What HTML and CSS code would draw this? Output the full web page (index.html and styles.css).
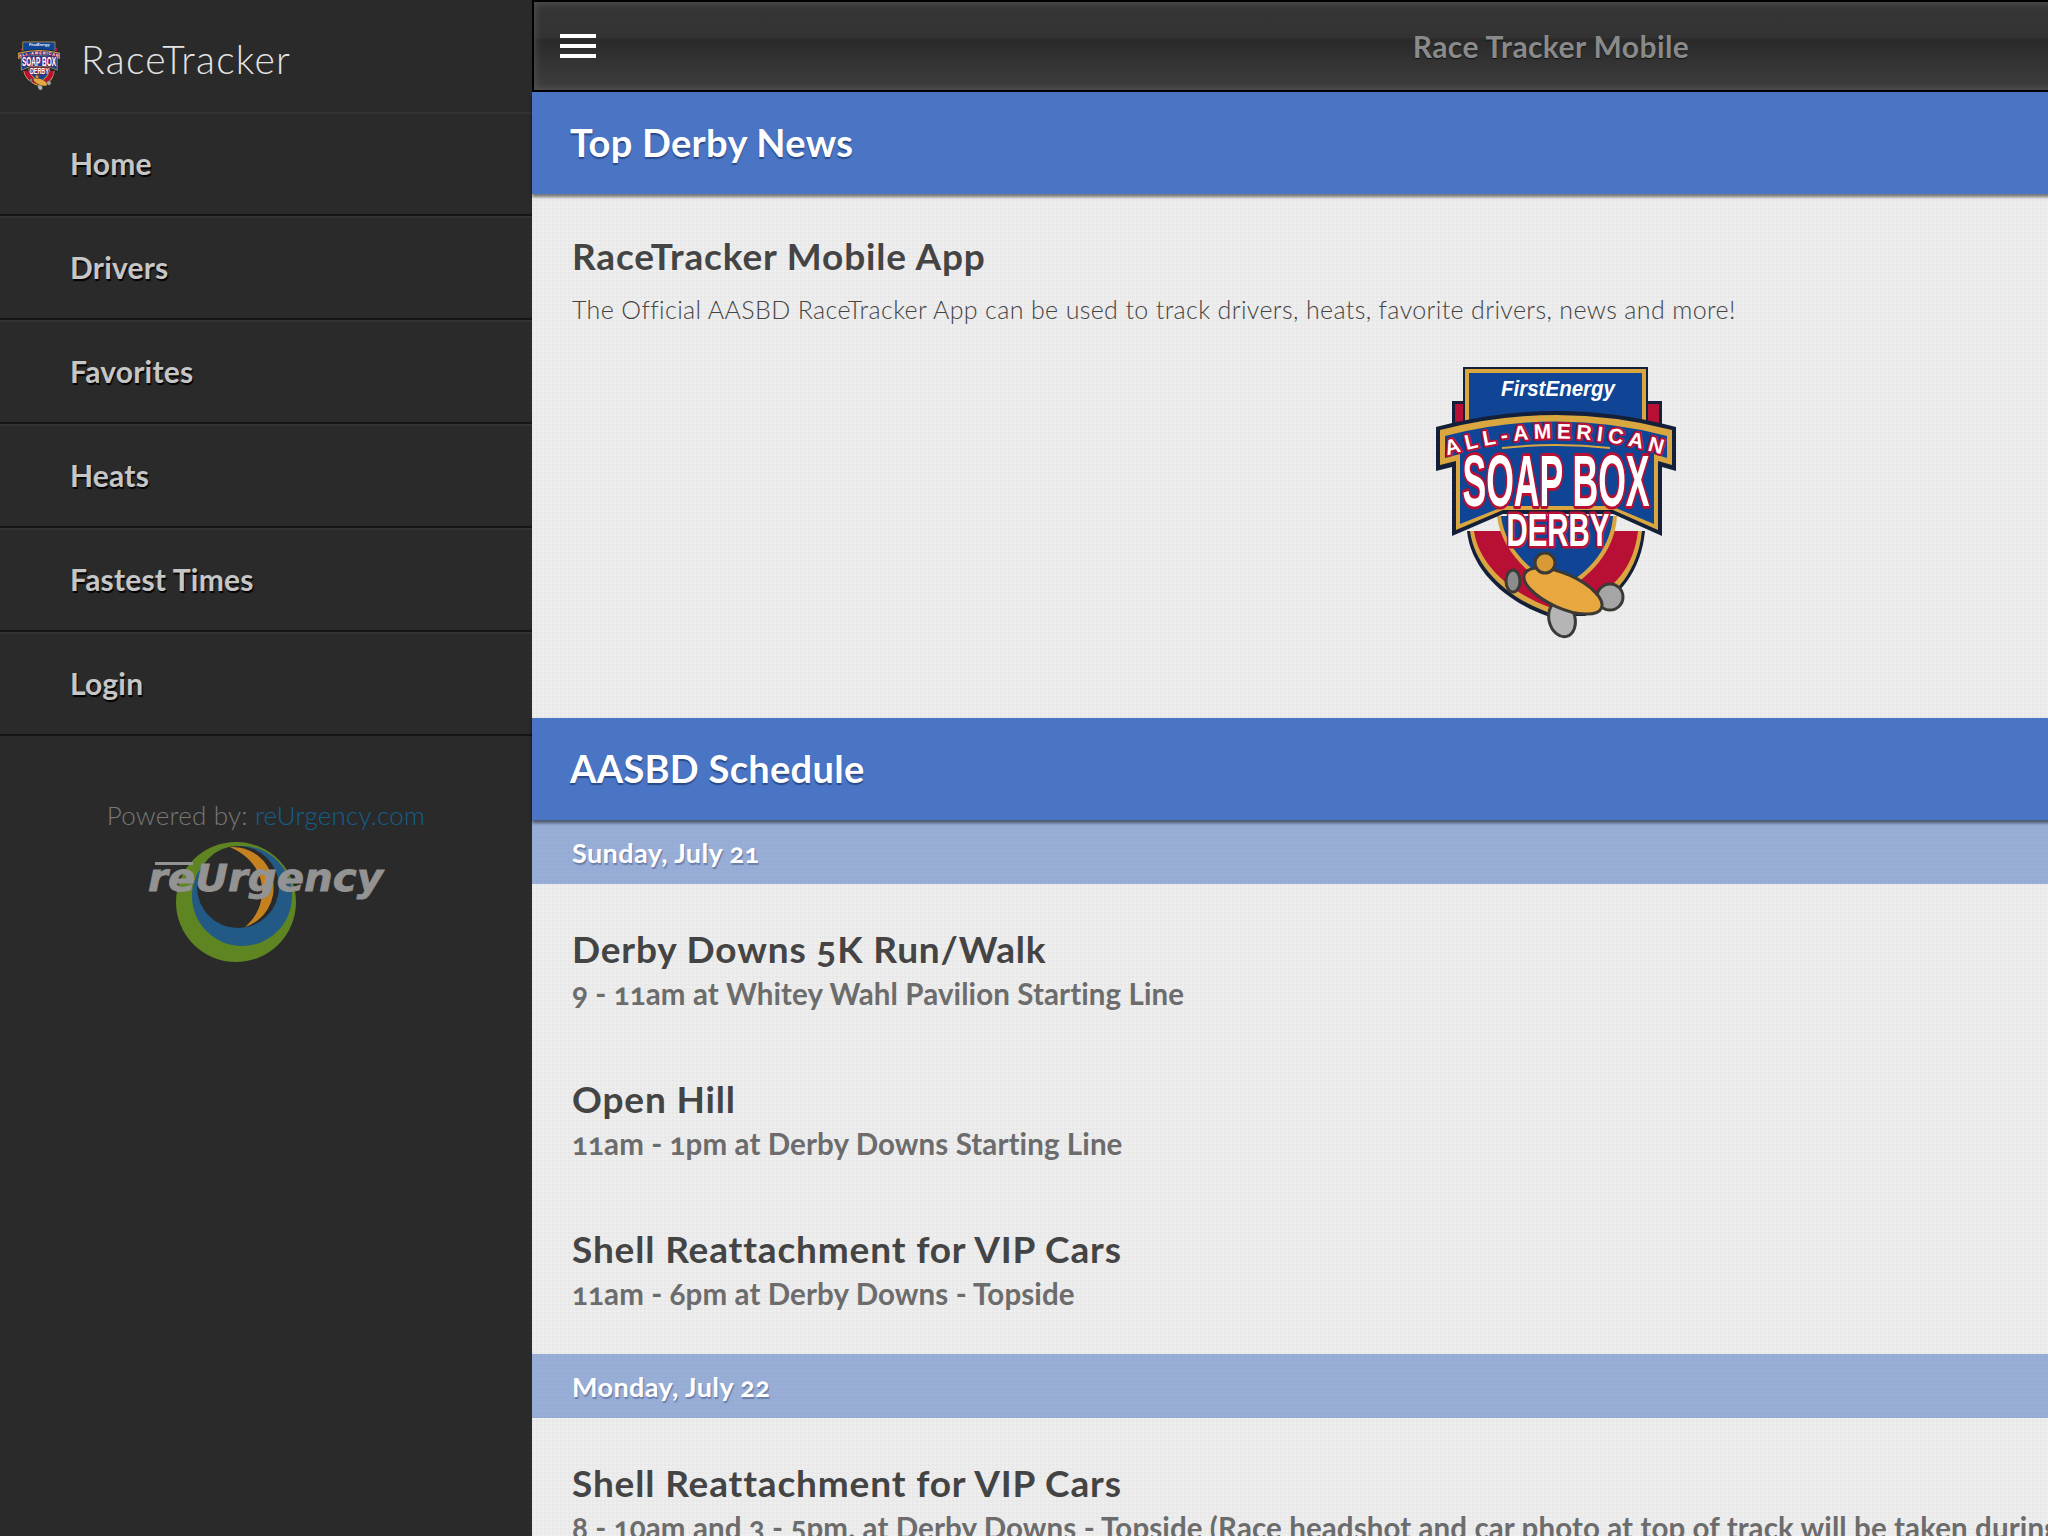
FILE: index.html
```html
<!DOCTYPE html>
<html lang="en">
<head>
    <meta charset="UTF-8">
    <meta name="viewport" content="width=device-width, initial-scale=1.0">
    <title>Race Tracker Mobile</title>
    <link rel="stylesheet" href="styles.css">
</head>
<body>
    <svg class="defs" width="0" height="0">
        <defs>
            <!-- shield logo, drawn on a 242x275 box -->
            <symbol id="derby-logo" viewBox="0 0 242 275" preserveAspectRatio="none">
                <!-- side tabs and top panel -->
                <rect x="17" y="35" width="210" height="40" fill="#14203a"/>
                <rect x="20" y="38" width="204" height="36" fill="#b80f34"/>
                <rect x="28" y="1" width="185" height="65" fill="#14203a"/>
                <rect x="30" y="3" width="181" height="63" fill="#d9a63f"/>
                <rect x="34" y="7" width="173" height="60" fill="#0f4594"/>
                <!-- lower shield -->
                <path d="M32 165C36 205 72 236 112 250L150 250C185 232 206 205 210 165Z" fill="#14203a"/>
                <path d="M35 165C40 203 74 232 112 246L150 246C183 229 203 203 207 165Z" fill="#d9a63f"/>
                <path d="M39 165C44 200 78 228 114 241L148 236C180 224 199 200 203 165Z" fill="#b80f34"/>
                <path d="M62 150H182C180 182 160 206 134 222L122 226C96 210 66 186 62 150Z" fill="#d9a63f"/>
                <path d="M66 150H178C176 180 156 204 132 218L122 221C98 206 70 184 66 150Z" fill="#0f4594"/>
                <!-- banner -->
                <path d="M1 61Q122 29 241 61V105L227 101V170L178 148H68L17 170V101L1 105Z" fill="#14203a"/>
                <path d="M5 64Q122 34 237 64V99L223 95V164L178 144H68L21 164V95L5 99Z" fill="#d9a63f"/>
                <path d="M10 70Q122 41 232 70V92L219 88V158L176 140H70L25 158V88L10 92Z" fill="#0f4594"/>
                <path d="M67 82Q121 76 175 82" fill="none" stroke="#d9a63f" stroke-width="2"/>
                <path id="arc" d="M11 90Q122 55 232 90" fill="none"/>
                <text class="logo-arc"><textPath href="#arc" textLength="218" startOffset="1">ALL-AMERICAN</textPath></text>
                <text class="logo-first" x="123" y="30" textLength="114" lengthAdjust="spacingAndGlyphs">FirstEnergy</text>
                <text class="logo-soap" x="121" y="140" textLength="187" lengthAdjust="spacingAndGlyphs">SOAP BOX</text>
                <text class="logo-derby" x="123" y="180" textLength="103" lengthAdjust="spacingAndGlyphs">DERBY</text>
                <!-- car -->
                <g stroke="#3b3a36" stroke-width="3">
                    <ellipse cx="78" cy="215" rx="7" ry="11" fill="#8c8c8c"/>
                    <circle cx="175" cy="231" r="13" fill="#a5a5a5"/>
                    <ellipse cx="127" cy="253" rx="13" ry="18" fill="#b5b5b5" transform="rotate(-15 127 253)"/>
                    <ellipse cx="128" cy="225" rx="42" ry="17" fill="#e8a83f" transform="rotate(24 128 225)"/>
                    <circle cx="110" cy="197" r="10" fill="#d89a35"/>
                </g>
            </symbol>
        </defs>
    </svg>

    <div class="page">
        <nav class="sidebar">
            <div class="brand">
                <svg class="brand-logo"><use href="#derby-logo"/></svg>
                <span class="brand-name">RaceTracker</span>
            </div>
            <ul class="menu">
                <li>Home</li>
                <li>Drivers</li>
                <li>Favorites</li>
                <li>Heats</li>
                <li>Fastest Times</li>
                <li>Login</li>
            </ul>
            <div class="powered">
                <p>Powered by: <a href="#">reUrgency.com</a></p>
                <svg class="reurgency" viewBox="0 0 240 122">
                    <circle cx="89" cy="61" r="60" fill="#5f8522"/>
                    <circle cx="95" cy="55" r="50" fill="#235a85"/>
                    <circle cx="91" cy="46" r="41" fill="#2a2a2a"/>
                    <path d="M83 6A41 41 0 0 1 98 86C122 66 124 24 83 6Z" fill="#c5811f"/>
                    <rect x="8" y="21" width="38" height="3" fill="#939393"/>
                    <text class="reurgency-text" x="1" y="50" textLength="235" lengthAdjust="spacingAndGlyphs">reUrgency</text>
                </svg>
            </div>
        </nav>

        <main class="content">
            <header class="topbar">
                <span class="menu-icon"><i></i><i></i><i></i></span>
                <span class="topbar-title">Race Tracker Mobile</span>
            </header>

            <h2 class="section-bar">Top Derby News</h2>
            <section class="news">
                <h3 class="item-title">RaceTracker Mobile App</h3>
                <p class="news-text">The Official AASBD RaceTracker App can be used to track drivers, heats, favorite drivers, news and more!</p>
                <svg class="news-logo"><use href="#derby-logo"/></svg>
            </section>

            <h2 class="section-bar">AASBD Schedule</h2>
            <h4 class="day-bar">Sunday, July 21</h4>
            <section class="day">
                <div class="event">
                    <h3 class="item-title">Derby Downs 5K Run/Walk</h3>
                    <p class="event-time">9 - 11am at Whitey Wahl Pavilion Starting Line</p>
                </div>
                <div class="event">
                    <h3 class="item-title">Open Hill</h3>
                    <p class="event-time">11am - 1pm at Derby Downs Starting Line</p>
                </div>
                <div class="event">
                    <h3 class="item-title">Shell Reattachment for VIP Cars</h3>
                    <p class="event-time">11am - 6pm at Derby Downs - Topside</p>
                </div>
            </section>
            <h4 class="day-bar">Monday, July 22</h4>
            <section class="day">
                <div class="event">
                    <h3 class="item-title">Shell Reattachment for VIP Cars</h3>
                    <p class="event-time">8 - 10am and 3 - 5pm. at Derby Downs - Topside (Race headshot and car photo at top of track will be taken during this time)</p>
                </div>
            </section>
        </main>
    </div>
</body>
</html>
```

FILE: styles.css
```css
html, body {
    margin: 0;
    padding: 0;
    height: 100%;
    overflow: hidden;
    background: #2a2a2a;
}
body {
    font-family: Lato, "Open Sans", sans-serif;
    font-variant-numeric: oldstyle-nums;
    font-variant-ligatures: none;
}
.defs {
    display: block;
    height: 0;
}
h2, h3, h4, p, ul {
    margin: 0;
    padding: 0;
}

/* logo lettering */
.logo-first {
    font-family: "Liberation Sans", sans-serif;
    font-style: italic;
    font-weight: 700;
    font-size: 22px;
    text-anchor: middle;
    fill: #fff;
}
.logo-arc, .logo-soap, .logo-derby {
    font-family: "Liberation Sans", sans-serif;
    font-weight: 700;
    fill: #fff;
    stroke: #b80f34;
    paint-order: stroke;
    stroke-linejoin: round;
}
.logo-arc {
    font-size: 21px;
    stroke-width: 4px;
}
.logo-soap {
    font-size: 72px;
    text-anchor: middle;
    stroke-width: 6px;
}
.logo-derby {
    font-size: 47px;
    text-anchor: middle;
    stroke-width: 5px;
}

.page {
    display: flex;
    width: 2580px;
    height: 1536px;
}

/* sidebar */
.sidebar {
    flex: none;
    width: 532px;
    color: #ccc;
}
.brand {
    display: flex;
    align-items: center;
    gap: 20px;
    height: 112px;
    padding-left: 17px;
    border-bottom: 2px solid #333;
}
.brand-logo {
    width: 44px;
    height: 50px;
    margin-top: 20px;
}
.brand-name {
    padding-top: 5px;
    font-size: 39px;
    letter-spacing: 1.3px;
    font-weight: 300;
    color: #e4e4e4;
}
.menu {
    list-style: none;
}
.menu li {
    height: 100px;
    line-height: 99px;
    padding-left: 70px;
    font-size: 30px;
    letter-spacing: 0.2px;
    font-weight: 700;
    color: #c6c6c6;
    text-shadow: 1px 2px 1px #000;
    border-top: 2px solid #333;
    border-bottom: 2px solid #151515;
}
.menu li:first-child {
    border-top: 0;
}
.powered {
    margin-top: 63px;
    text-align: center;
}
.powered p {
    font-size: 26px;
    line-height: 32px;
    letter-spacing: 0.2px;
    font-weight: 300;
    color: #777;
}
.powered a {
    color: #125f8c;
    text-decoration: none;
}
.reurgency {
    display: block;
    width: 240px;
    height: 122px;
    margin: 10px 0 0 147px;
}
.reurgency-text {
    font-family: "DejaVu Sans", sans-serif;
    font-style: italic;
    font-weight: 700;
    font-size: 38px;
    fill: #939393;
    stroke: #939393;
    stroke-width: 0.8px;
}

/* right side */
.content {
    flex: none;
    width: 2048px;
    background-color: #ebebeb;
    background-image:
        radial-gradient(circle at 1px 1px, rgba(0, 0, 0, 0.012) 1px, transparent 1.5px),
        radial-gradient(circle at 3px 3px, rgba(255, 255, 255, 0.2) 1px, transparent 1.5px);
    background-size: 4px 4px;
}
.topbar {
    position: relative;
    display: flex;
    align-items: center;
    justify-content: center;
    box-sizing: border-box;
    height: 92px;
    padding-right: 12px;
    border: 2px solid #000;
    border-right: 0;
    background: linear-gradient(#363636 0, #333 40%, #2a2a2a 43%, #3e3e3e 100%);
    box-shadow: inset 0 0 8px #5a5a5a;
}
.menu-icon {
    position: absolute;
    left: 26px;
    top: 32px;
    display: flex;
    flex-direction: column;
    gap: 6px;
}
.menu-icon i {
    display: block;
    width: 36px;
    height: 4px;
    background: #fff;
}
.topbar-title {
    font-size: 30px;
    letter-spacing: 0.4px;
    font-weight: 700;
    color: #8a8a8a;
    text-shadow: 0 1px 1px #111;
}
.section-bar {
    position: relative;
    height: 102px;
    line-height: 100px;
    padding-left: 38px;
    font-size: 38px;
    letter-spacing: 0.3px;
    font-weight: 700;
    color: #fff;
    background: #4a74c4;
    box-shadow: 0 3px 3px rgba(0, 0, 0, 0.5);
    text-shadow: 0 2px 1px #2b4a85;
}
.news {
    height: 524px;
    box-sizing: border-box;
    padding: 40px 40px 0;
}
.item-title {
    font-size: 37px;
    letter-spacing: 0.85px;
    line-height: 44px;
    font-weight: 700;
    color: #444;
}
.news-text {
    margin-top: 8px;
    font-size: 25px;
    letter-spacing: 0.36px;
    line-height: 46px;
    font-weight: 300;
    color: #444;
}
.news-logo {
    display: block;
    width: 242px;
    height: 275px;
    margin: 34px 0 0 863px;
}
.day-bar {
    height: 64px;
    line-height: 66px;
    padding-left: 40px;
    font-size: 27px;
    letter-spacing: 0.4px;
    font-weight: 700;
    color: #fff;
    background: rgba(74, 116, 196, 0.52);
    text-shadow: 1px 2px 1px #6b7ea8;
}
.day {
    padding: 43px 40px 0;
}
.event {
    height: 150px;
    white-space: nowrap;
}
.day .event:last-child {
    height: 127px;
}
.event-time {
    margin-top: 2px;
    font-size: 29.5px;
    letter-spacing: 0.1px;
    line-height: 42px;
    font-weight: 700;
    color: #6c6c6c;
}
```
